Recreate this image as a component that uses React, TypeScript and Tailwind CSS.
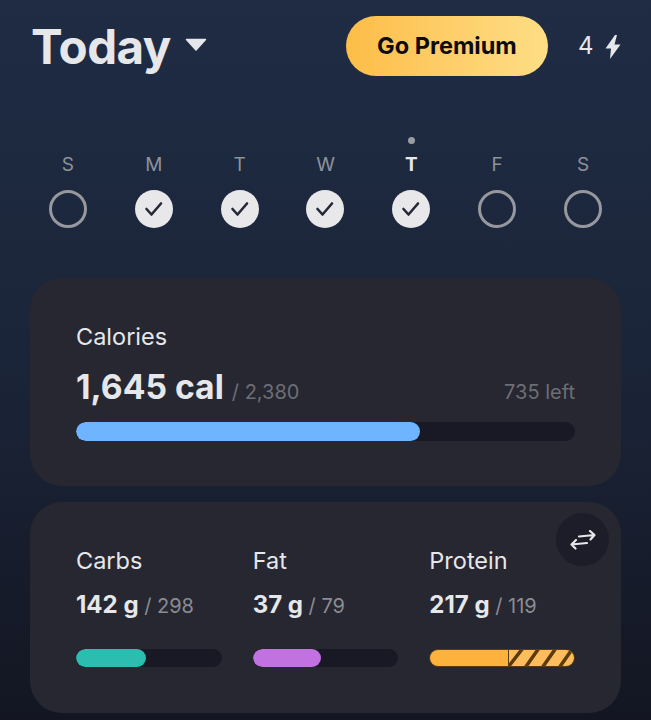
const DAYS = [
  { label: "S", done: false },
  { label: "M", done: true },
  { label: "T", done: true },
  { label: "W", done: true },
  { label: "T", done: true, today: true },
  { label: "F", done: false },
  { label: "S", done: false },
];

function Macro({
  name,
  amount,
  goal,
  children,
}: {
  name: string;
  amount: string;
  goal: string;
  children: React.ReactNode;
}) {
  return (
    <div className="w-[146px]">
      <div className="text-[23.5px] leading-[28px] text-[#e6e7ea]">{name}</div>
      <div className="mt-[16px] h-[28px] whitespace-nowrap leading-[28px]">
        <span className="text-[24px] font-bold text-[#e6e7ea]">{amount}</span>
        <span className="text-[20px] text-[#8b8c93]"> / {goal}</span>
      </div>
      <div className="mt-[30px]">{children}</div>
    </div>
  );
}

function Track({ fill, color }: { fill: number; color: string }) {
  return (
    <div className="h-[18px] overflow-hidden rounded-full bg-[#181924]">
      <div className={`h-full rounded-full ${color}`} style={{ width: `${fill}%` }} />
    </div>
  );
}

export default function App() {
  return (
    <div className="h-[720px] w-[651px] overflow-hidden bg-gradient-to-b from-[#1f2c44] via-[#1b2539] to-[#131622] font-['Inter',sans-serif]">
      <header className="mt-[16px] flex h-[60px] items-center pl-[31px]">
        <h1 className="mt-[1px] text-[47.5px] font-bold leading-none tracking-[-0.5px] text-[#e6e7ea]">Today</h1>
        <svg width="22" height="13" viewBox="0 0 22 13" className="ml-[14px] mt-[-3px]">
          <path d="M1.5 1.5 H20.5 L11 12 Z" fill="#e6e7ea" stroke="#e6e7ea" strokeWidth="1.5" strokeLinejoin="round" />
        </svg>
        <button className="ml-[139px] h-[60px] w-[202px] rounded-full bg-gradient-to-r from-[#fdbd47] to-[#fede85] text-[23.5px] font-bold text-[#0c0c10]">
          Go Premium
        </button>
        <span className="ml-[30px] text-[24px] text-[#e6e7ea]">4</span>
        <svg width="16" height="24" viewBox="0 0 16 24" className="ml-[12px] mt-[1px]">
          <path d="M10 0 L0.5 13.5 H6 L5 24 L15.5 9.5 H9.5 L12 0 Z" fill="#e6e7ea" />
        </svg>
      </header>

      <div className="mt-[60px] grid grid-cols-7 px-[25px]">
        {DAYS.map((day, i) => (
          <div key={i} className="flex flex-col items-center">
            <div className="flex h-[8px] items-center">
              {day.today && <div className="h-[7px] w-[7px] rounded-full bg-[#9a9ca3]" />}
            </div>
            <div
              className={`mt-[9px] h-[24px] text-[19px] leading-[24px] ${
                day.today ? "font-bold text-[#e6e7ea]" : "text-[#8e929b]"
              }`}
            >
              {day.label}
            </div>
            {day.done ? (
              <div className="mt-[13px] h-[38px] w-[38px] rounded-full bg-[#e8e8ea]">
                <svg width="38" height="38" viewBox="0 0 38 38" fill="none" stroke="#252836" strokeWidth="2.6" strokeLinecap="round" strokeLinejoin="round">
                  <path d="M11.5 19 L16.5 24.5 L26 13.5" />
                </svg>
              </div>
            ) : (
              <div className="mt-[13px] h-[38px] w-[38px] rounded-full border-[3px] border-[#96989d]" />
            )}
          </div>
        ))}
      </div>

      <section className="mx-[30px] mt-[50px] h-[208px] rounded-[32px] bg-[#262730] px-[46px] pt-[45px]">
        <div className="text-[23.5px] leading-[28px] text-[#e6e7ea]">Calories</div>
        <div className="mt-[16px] flex h-[40px] items-baseline">
          <span className="text-[33.7px] font-bold leading-[40px] text-[#e6e7ea]">1,645 cal</span>
          <span className="ml-[8px] text-[20px] text-[#6d6e76]">/ 2,380</span>
          <span className="ml-auto text-[20px] text-[#6d6e76]">735 left</span>
        </div>
        <div className="mt-[15px] h-[19px] overflow-hidden rounded-full bg-[#181924]">
          <div className="h-full w-[69%] rounded-full bg-[#6fb4ff]" />
        </div>
      </section>

      <section className="relative mx-[30px] mt-[16px] h-[211px] rounded-[32px] bg-[#262730] px-[46px] pt-[45px]">
        <button className="absolute right-[12px] top-[11px] flex h-[53px] w-[53px] items-center justify-center rounded-full bg-[#1c1d28]">
          <svg width="26" height="20" viewBox="0 0 26 20" fill="none" stroke="#e6e7ea" strokeWidth="2.2" strokeLinecap="round" strokeLinejoin="round">
            <path d="M9 6.5 L24.5 5 M20 1 L24.5 5 L20.5 9.5" />
            <path d="M17 13 L1.5 14.5 M6 10 L1.5 14.5 L5.5 18.5" />
          </svg>
        </button>
        <div className="flex gap-[31px]">
          <Macro name="Carbs" amount="142 g" goal="298">
            <Track fill={48} color="bg-[#2cbdb0]" />
          </Macro>
          <Macro name="Fat" amount="37 g" goal="79">
            <Track fill={47} color="bg-[#c172e0]" />
          </Macro>
          <Macro name="Protein" amount="217 g" goal="119">
            <div className="relative flex h-[18px] overflow-hidden rounded-full border border-[#5c3a0c]">
              <div className="h-full w-[54%] bg-[#fdb23d]" />
              <div className="h-full flex-1 bg-[#fdbd5d]" />
              <svg width="67" height="18" viewBox="0 0 67 18" className="absolute left-[78px] top-[-1px]" fill="none" stroke="#5c3a0c" strokeWidth="3.5">
                <path d="M0 0 V18" strokeWidth="2" />
                <path d="M1 17 L15 -1 M17 19 L31 -1 M34 19 L48 -1 M51 19 L65 -1" />
              </svg>
            </div>
          </Macro>
        </div>
      </section>
    </div>
  );
}
